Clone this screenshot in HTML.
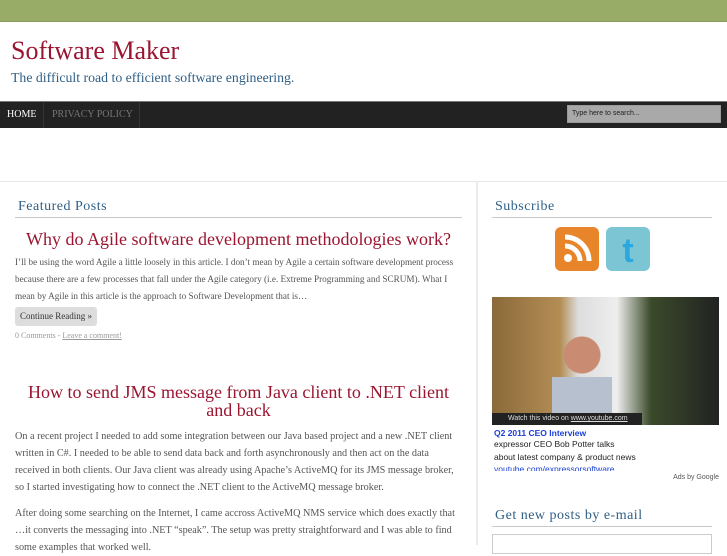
<!DOCTYPE html>
<html><head><meta charset="utf-8"><style>
*{margin:0;padding:0;box-sizing:border-box}
body{width:727px;height:545px;overflow:hidden;background:#fff;font-family:"Liberation Serif",serif;position:relative}
.top{position:absolute;left:0;top:0;width:727px;height:22px;background:#98ab67;border-bottom:1px solid #8a9c5c}
.title{position:absolute;left:11px;top:36px;font-size:26px;color:#9b1530}
.tag{position:absolute;left:11px;top:70px;font-size:13.8px;color:#2f5f86}
.nav{position:absolute;left:0;top:101px;width:727px;height:27px;background:#222;border-top:1px solid #777}
.nav a{position:absolute;top:0;height:26px;line-height:26px;font-size:10px;color:#777;text-decoration:none}
.search{position:absolute;left:567px;top:105px;width:154px;height:18px;background:#a9a9a9;border:1px solid #999;font-family:"Liberation Sans",sans-serif;font-size:7px;color:#222;line-height:16px;padding-left:4px}
.hr{position:absolute;left:0;top:181px;width:727px;height:1px;background:#e6e6e6}
.vr{position:absolute;left:476px;top:181px;width:2px;height:364px;background:#ececec}
h3{position:absolute;font-weight:normal;font-size:14px;color:#2f5f86;letter-spacing:.5px}
.line{position:absolute;height:1px;background:#c8c8c8}
.pt{position:absolute;color:#9b1530;font-size:18px;text-align:center;line-height:18px}
p.t{position:absolute;left:15px;width:440px;font-size:9.2px;color:#555;line-height:17px}
.btn{position:absolute;left:15px;top:307px;width:82px;height:19px;background:#ddd;border-radius:3px;font-size:9px;color:#333;line-height:19px;padding-left:5px}
.meta{position:absolute;left:15px;top:331px;font-size:8px;color:#999}
.ad{position:absolute;left:492px;top:297px;width:227px;height:190px;font-family:"Liberation Sans",sans-serif}
</style></head><body>
<div class="top"></div>
<div class="title">Software Maker</div>
<div class="tag">The difficult road to efficient software engineering.</div>
<div class="nav">
<a style="left:0;width:44px;padding-left:7px;color:#fff;border-right:1px solid #333">HOME</a>
<a style="left:45px;width:95px;padding-left:7px;border-right:1px solid #333">PRIVACY POLICY</a>
</div>
<div class="search">Type here to search...</div>
<div class="hr"></div><div class="vr"></div>
<h3 style="left:18px;top:199px">Featured Posts</h3>
<div class="line" style="left:15px;top:217px;width:447px"></div>
<div class="pt" style="left:15px;top:230px;width:447px">Why do Agile software development methodologies work?</div>
<p class="t" style="top:254px">I’ll be using the word Agile a little loosely in this article. I don’t mean by Agile a certain software development process because there are a few processes that fall under the Agile category (i.e. Extreme Programming and SCRUM). What I mean by Agile in this article is the approach to Software Development that is…</p>
<div class="btn">Continue Reading »</div>
<div class="meta">0 Comments - <u>Leave a comment!</u></div>
<div class="pt" style="left:15px;top:383px;width:447px">How to send JMS message from Java client to .NET client and back</div>
<p class="t" style="top:428px;font-size:10.2px;width:460px;white-space:nowrap">On a recent project I needed to add some integration between our Java based project and a new .NET client<br>written in C#. I needed to be able to send data back and forth asynchronously and then act on the data<br>received in both clients. Our Java client was already using Apache’s ActiveMQ for its JMS message broker,<br>so I started investigating how to connect the .NET client to the ActiveMQ message broker.</p>
<p class="t" style="top:505px;font-size:10.2px;width:460px;white-space:nowrap">After doing some searching on the Internet, I came accross ActiveMQ NMS service which does exactly that<br>…it converts the messaging into .NET “speak”. The setup was pretty straightforward and I was able to find<br>some examples that worked well.</p>
<h3 style="left:495px;top:199px">Subscribe</h3>
<div class="line" style="left:492px;top:217px;width:220px"></div>
<svg style="position:absolute;left:554px;top:226px" width="46" height="46"><rect x="1" y="1" width="44" height="44" rx="6" fill="#e8852a"/><circle cx="14" cy="32" r="4" fill="#fff"/><path d="M11 20a15 15 0 0 1 15 15M11 11a24 24 0 0 1 24 24" stroke="#fff" stroke-width="5" fill="none"/></svg>
<svg style="position:absolute;left:605px;top:226px" width="46" height="46"><rect x="1" y="1" width="44" height="44" rx="6" fill="#7cc5d4"/><text x="23" y="36" font-family="Liberation Sans" font-weight="bold" font-size="34" fill="#2aa9e0" text-anchor="middle">t</text></svg>
<div class="ad">
<div style="width:227px;height:128px;background:linear-gradient(90deg,#8a6a3a 0,#b48d55 30%,#ddd 38%,#eee 55%,#3b4a2a 70%,#222 100%)"><div style="position:absolute;left:60px;top:30px;width:60px;height:98px;background:radial-gradient(circle at 30px 28px,#c98c72 0 18px,transparent 19px),linear-gradient(#0000 50px,#b7c0cf 50px);"></div></div>
<div style="position:absolute;left:0;top:116px;width:150px;height:12px;background:#222;color:#ddd;font-size:7px;line-height:12px;padding-left:16px">Watch this video on <u>www.youtube.com</u></div>
<div style="font-size:8.5px;color:#1a3fd8;font-weight:bold;margin:3px 0 0 2px">Q2 2011 CEO Interview</div>
<div style="font-size:8.5px;color:#222;line-height:13px;margin-left:2px">expressor CEO Bob Potter talks<br>about latest company &amp; product news</div>
<div style="font-size:8.5px;color:#1a3fd8;margin-left:2px;height:7px;overflow:hidden">youtube.com/expressorsoftware</div>
<div style="font-size:7px;color:#555;text-align:right;margin-top:3px">Ads by Google</div>
</div>
<h3 style="left:495px;top:508px">Get new posts by e-mail</h3>
<div class="line" style="left:492px;top:526px;width:220px"></div>
<div style="position:absolute;left:492px;top:534px;width:220px;height:20px;border:1px solid #ccc"></div>
</body></html>
